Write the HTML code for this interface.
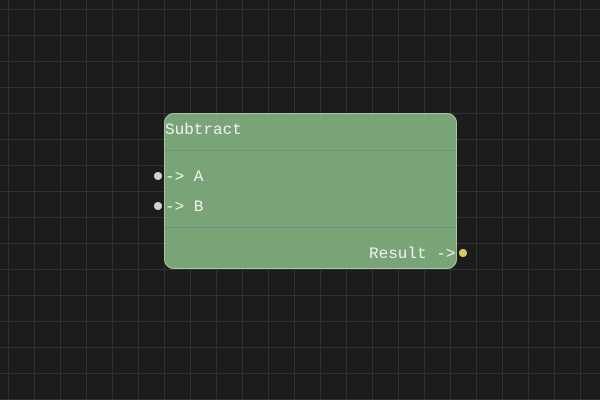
<!DOCTYPE html>
<html><head><style>
html,body{margin:0;padding:0;}
body{width:600px;height:400px;overflow:hidden;position:relative;background-color:#1c1c1c;
background-image:linear-gradient(to right,#313131 1px,transparent 1px),linear-gradient(to bottom,#313131 1px,transparent 1px);
background-size:26px 26px;background-position:8px 9px;font-family:"Liberation Mono",monospace;}
.node{position:absolute;left:164px;top:113px;width:291px;height:154px;background:rgba(128,176,128,0.92);border:1px solid #a9c7a6;border-radius:10px;box-sizing:content-box;}
.sep{position:absolute;left:0;right:0;height:1px;background:#6a8f86;}
.t{position:absolute;color:#f2f2f2;font-size:16px;line-height:16px;white-space:pre;}
.dot{position:absolute;width:8px;height:8px;border-radius:50%;}
</style></head><body>
<div class="node">
<div class="sep" style="top:36px"></div>
<div class="sep" style="top:113px"></div>
</div>
<div class="t" style="left:165px;top:122px">Subtract</div>
<div class="t" style="left:165px;top:169px">-&gt; A</div>
<div class="t" style="left:165px;top:199px">-&gt; B</div>
<div class="t" style="left:369px;top:246px">Result -&gt;</div>
<div class="dot" style="left:154px;top:172px;background:#d0d0d0"></div>
<div class="dot" style="left:154px;top:202px;background:#d0d0d0"></div>
<div class="dot" style="left:459px;top:249px;background:#d8cc5a"></div>
</body></html>
